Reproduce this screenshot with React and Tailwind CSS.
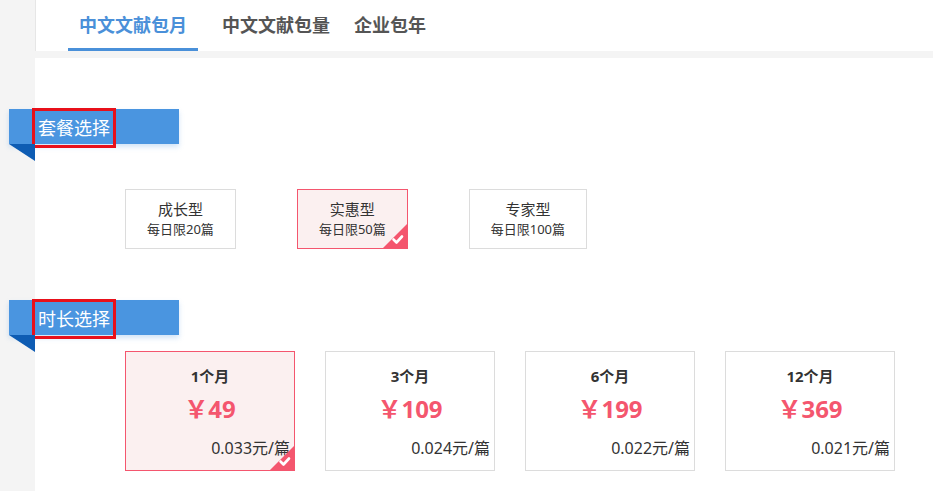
import React from "react";

const font = { fontFamily: '"Noto Sans", "Noto Sans CJK SC", sans-serif' };

function Corner() {
  return (
    <svg className="absolute right-0 bottom-0" width="24" height="24" viewBox="0 0 24 24">
      <polygon points="24,0 24,24 0,24" fill="#f4566e" />
      <path d="M10.5 15.5 L13.5 18.5 L19 12.5" stroke="#fff" strokeWidth="2.6" fill="none" strokeLinecap="round" strokeLinejoin="round" />
    </svg>
  );
}

function Banner({ title }) {
  return (
    <div className="ml-[-26px] w-[170px]">
      <div className="h-[35px] bg-[#4a95e0] shadow-[0_3px_5px_rgba(74,149,224,0.25)] pl-[23px] flex items-start">
        <span className="mt-[-1px] h-[40px] border-[3px] border-[#e8101a] px-[3px] flex items-center text-white text-[18px] leading-none">
          {title}
        </span>
      </div>
      <svg width="26" height="17" viewBox="0 0 26 17" className="block">
        <polygon points="0,0 26,0 26,17" fill="#0e5cb3" />
      </svg>
    </div>
  );
}

export default function App() {
  const packs = [
    { name: "成长型", sub: "每日限20篇" },
    { name: "实惠型", sub: "每日限50篇", sel: true },
    { name: "专家型", sub: "每日限100篇" },
  ];
  const durations = [
    { t: "1个月", p: "49", u: "0.033元/篇", sel: true },
    { t: "3个月", p: "109", u: "0.024元/篇" },
    { t: "6个月", p: "199", u: "0.022元/篇" },
    { t: "12个月", p: "369", u: "0.021元/篇" },
  ];
  return (
    <div className="w-[933px] h-[491px] overflow-hidden bg-[#f4f4f4] flex" style={font}>
      <div className="w-[35px] shrink-0" />
      <div className="flex-1 flex flex-col">
        <div className="h-[51px] bg-white border-l border-[#e6e6e6] pl-[32px] flex items-stretch">
          <div className="px-[11px] flex items-center border-b-[3px] border-[#4a90d9] pt-[3px] text-[18px] font-bold text-[#4a90d9]">中文文献包月</div>
          <div className="ml-[13px] px-[11px] flex items-center border-b-[3px] border-transparent pt-[3px] text-[18px] font-bold text-[#555]">中文文献包量</div>
          <div className="ml-[2px] px-[11px] flex items-center border-b-[3px] border-transparent pt-[3px] text-[18px] font-bold text-[#555]">企业包年</div>
        </div>
        <div className="mt-[7px] flex-1 bg-white pt-[51px]">
          <Banner title="套餐选择" />
          <div className="mt-[28px] ml-[90px] flex gap-[61px]">
            {packs.map((p) => (
              <div
                key={p.name}
                className={`relative h-[60px] px-[21px] flex flex-col items-center justify-center border ${
                  p.sel ? "border-[#f4566e] bg-[#fbf0f0]" : "border-[#dcdcdc] bg-white"
                } text-[#333]`}
              >
                <div className="text-[15px] leading-[21px]">{p.name}</div>
                <div className="text-[13px] leading-[19px]">{p.sub}</div>
                {p.sel && <Corner />}
              </div>
            ))}
          </div>
          <div className="mt-[51px]">
            <Banner title="时长选择" />
          </div>
          <div className="mt-[-1px] ml-[90px] flex gap-[30px]">
            {durations.map((d) => (
              <div
                key={d.t}
                className={`relative w-[170px] h-[120px] border ${
                  d.sel ? "border-[#f4566e] bg-[#fbf0f0]" : "border-[#dcdcdc] bg-white"
                } flex flex-col`}
              >
                <div className="mt-[14px] text-center text-[15px] font-bold text-[#333] leading-[20px]">{d.t}</div>
                <div className="mt-[8px] text-center text-[24px] font-bold text-[#f4566e] leading-[30px]">￥{d.p}</div>
                <div className="mt-[14px] pr-[4px] text-right text-[16px] text-[#333] leading-[21px]">{d.u}</div>
                {d.sel && <Corner />}
              </div>
            ))}
          </div>
        </div>
      </div>
    </div>
  );
}
